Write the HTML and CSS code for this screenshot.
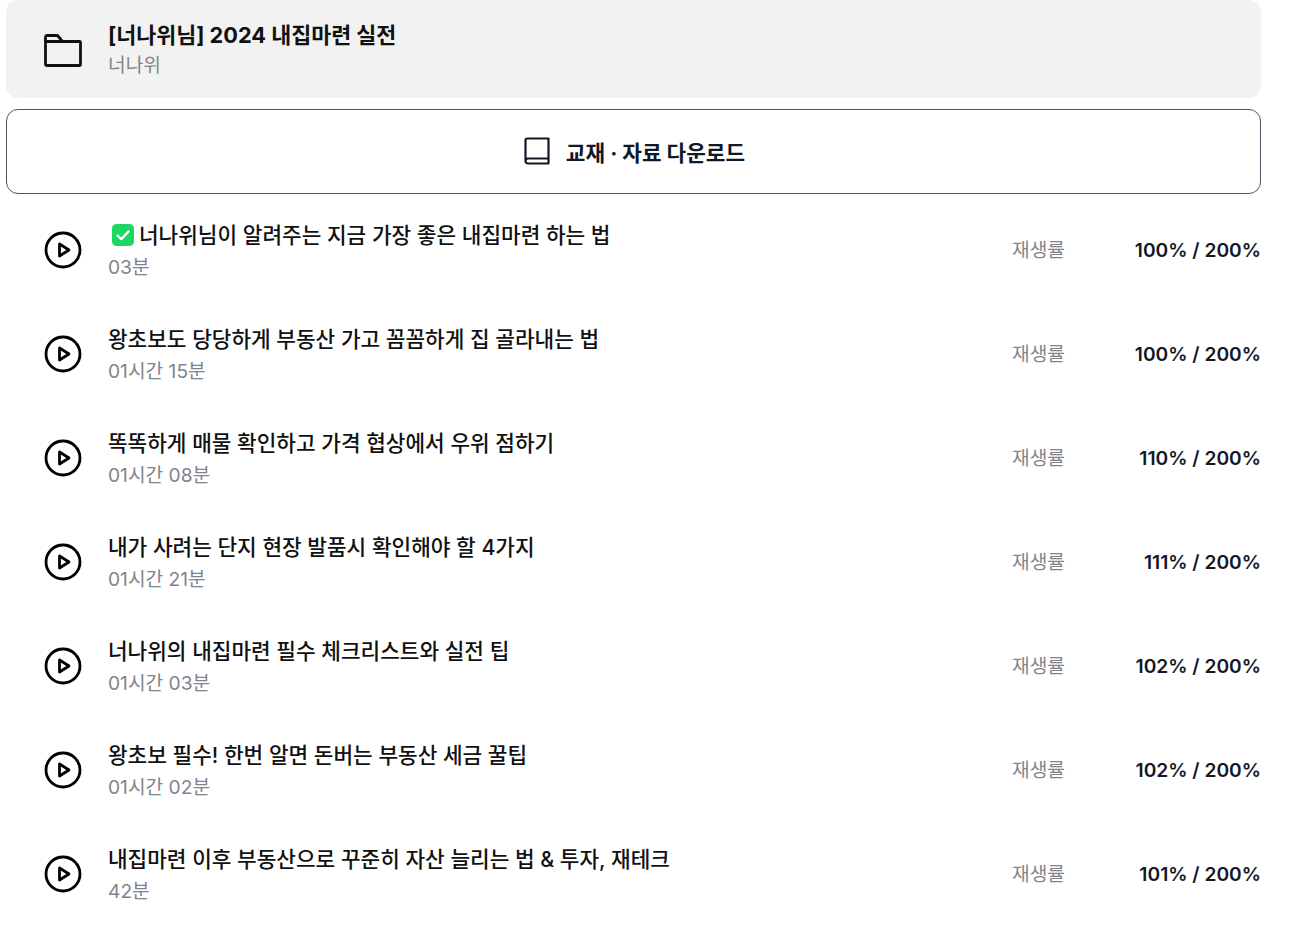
FILE: index.html
```html
<!DOCTYPE html>
<html lang="ko">
<head>
<meta charset="utf-8">
<title>2024 내집마련 실전</title>
<link rel="stylesheet" href="styles.css">
</head>
<body>
<main class="page">
  <header class="course">
    <svg class="icon" viewBox="0 0 38 38" width="38" height="38" fill="none" stroke="#111" stroke-width="2.800" stroke-linejoin="round" stroke-linecap="round"><path d="M1.500 33V6a1.500 1.500 0 0 1 1.500-1.500h10.500l5 6H35.500a1 1 0 0 1 1 1V33a1.500 1.500 0 0 1-1.500 1.500H3A1.500 1.500 0 0 1 1.500 33Z"/><path d="M1.500 10.500H18"/></svg>
    <div class="text course-text">
      <h1 class="course-title">[너나위님] 2024 내집마련 실전</h1>
      <p class="sub">너나위</p>
    </div>
  </header>
  <a class="download">
    <svg viewBox="0 0 26 28" width="26" height="28" fill="none" stroke="#111827" stroke-width="2.200" stroke-linejoin="round" stroke-linecap="round"><path d="M1.500 24V3A1.500 1.500 0 0 1 3 1.500H24.500V26.500H4A2.500 2.500 0 0 1 1.500 24Zm0 0A2.500 2.500 0 0 1 4 21.500H24.500"/></svg>
    <span>교재 · 자료 다운로드</span>
  </a>
  <ul class="list">
    <li class="row">
      <svg class="icon" viewBox="0 0 38 38" width="38" height="38" fill="none" stroke="#000" stroke-width="2.800" stroke-linejoin="round"><circle cx="19" cy="19" r="17"/><path d="M15.500 13v12l9.500-6Z"/></svg>
      <div class="text">
        <h2 class="title"><svg class="check" viewBox="0 0 24 24" width="24" height="24"><rect x="1" y="1" width="22" height="22" rx="4.500" fill="#1ed760"/><path d="M6.500 12.500l3.800 3.600 7.200-7.600" fill="none" stroke="#fff" stroke-width="2.400" stroke-linecap="round" stroke-linejoin="round"/></svg>너나위님이 알려주는 지금 가장 좋은 내집마련 하는 법</h2>
        <p class="sub">03분</p>
      </div>
      <span class="rate-label">재생률</span>
      <span class="rate">100% / 200%</span>
    </li>
    <li class="row">
      <svg class="icon" viewBox="0 0 38 38" width="38" height="38" fill="none" stroke="#000" stroke-width="2.800" stroke-linejoin="round"><circle cx="19" cy="19" r="17"/><path d="M15.500 13v12l9.500-6Z"/></svg>
      <div class="text">
        <h2 class="title">왕초보도 당당하게 부동산 가고 꼼꼼하게 집 골라내는 법</h2>
        <p class="sub">01시간 15분</p>
      </div>
      <span class="rate-label">재생률</span>
      <span class="rate">100% / 200%</span>
    </li>
    <li class="row">
      <svg class="icon" viewBox="0 0 38 38" width="38" height="38" fill="none" stroke="#000" stroke-width="2.800" stroke-linejoin="round"><circle cx="19" cy="19" r="17"/><path d="M15.500 13v12l9.500-6Z"/></svg>
      <div class="text">
        <h2 class="title">똑똑하게 매물 확인하고 가격 협상에서 우위 점하기</h2>
        <p class="sub">01시간 08분</p>
      </div>
      <span class="rate-label">재생률</span>
      <span class="rate">110% / 200%</span>
    </li>
    <li class="row">
      <svg class="icon" viewBox="0 0 38 38" width="38" height="38" fill="none" stroke="#000" stroke-width="2.800" stroke-linejoin="round"><circle cx="19" cy="19" r="17"/><path d="M15.500 13v12l9.500-6Z"/></svg>
      <div class="text">
        <h2 class="title">내가 사려는 단지 현장 발품시 확인해야 할 4가지</h2>
        <p class="sub">01시간 21분</p>
      </div>
      <span class="rate-label">재생률</span>
      <span class="rate">111% / 200%</span>
    </li>
    <li class="row">
      <svg class="icon" viewBox="0 0 38 38" width="38" height="38" fill="none" stroke="#000" stroke-width="2.800" stroke-linejoin="round"><circle cx="19" cy="19" r="17"/><path d="M15.500 13v12l9.500-6Z"/></svg>
      <div class="text">
        <h2 class="title">너나위의 내집마련 필수 체크리스트와 실전 팁</h2>
        <p class="sub">01시간 03분</p>
      </div>
      <span class="rate-label">재생률</span>
      <span class="rate">102% / 200%</span>
    </li>
    <li class="row">
      <svg class="icon" viewBox="0 0 38 38" width="38" height="38" fill="none" stroke="#000" stroke-width="2.800" stroke-linejoin="round"><circle cx="19" cy="19" r="17"/><path d="M15.500 13v12l9.500-6Z"/></svg>
      <div class="text">
        <h2 class="title">왕초보 필수! 한번 알면 돈버는 부동산 세금 꿀팁</h2>
        <p class="sub">01시간 02분</p>
      </div>
      <span class="rate-label">재생률</span>
      <span class="rate">102% / 200%</span>
    </li>
    <li class="row">
      <svg class="icon" viewBox="0 0 38 38" width="38" height="38" fill="none" stroke="#000" stroke-width="2.800" stroke-linejoin="round"><circle cx="19" cy="19" r="17"/><path d="M15.500 13v12l9.500-6Z"/></svg>
      <div class="text">
        <h2 class="title">내집마련 이후 부동산으로 꾸준히 자산 늘리는 법 &amp; 투자, 재테크</h2>
        <p class="sub">42분</p>
      </div>
      <span class="rate-label">재생률</span>
      <span class="rate">101% / 200%</span>
    </li>
  </ul>
</main>
</body>
</html>
```

FILE: styles.css
```css
* { box-sizing: border-box; }
html, body { margin: 0; padding: 0; background: #fff; }
body {
  font-family: Inter, "Noto Sans CJK KR", sans-serif;
  color: #111;
}
.page {
  width: 1255px;
  margin-left: 6px;
  height: 931px;
  overflow: hidden;
}
.course {
  display: flex;
  align-items: center;
  gap: 26px;
  height: 98px;
  padding-left: 38px;
  padding-top: 2px;
  background: #f2f2f2;
  border-radius: 12px;
}
.icon { flex: none; }
.text { flex: 1; min-width: 0; display: flex; flex-direction: column; gap: 6px; padding-top: 2px; }
.course-text { gap: 4px; padding-top: 0; }
.course-title, .title, .sub { margin: 0; white-space: nowrap; }
.course-title { font-size: 21.75px; line-height: 26px; font-weight: 700; color: #111; }
.title { font-size: 21.33px; line-height: 26px; font-weight: 500; color: #111; display: flex; align-items: center; }
.sub { font-size: 19.2px; line-height: 26px; font-weight: 400; color: #80858c; }
.download {
  display: flex;
  align-items: center;
  justify-content: center;
  gap: 16px;
  height: 85px;
  margin-top: 11px;
  padding: 0 0 1px 2px;
  border: 1px solid #4b5563;
  border-radius: 12px;
  background: #fff;
  font-size: 21.33px;
  font-weight: 700;
  color: #111827;
}
.list { list-style: none; margin: 4px 0 0; padding: 0; }
.row {
  display: flex;
  align-items: center;
  gap: 26px;
  height: 104px;
  padding-left: 38px;
}
.check { flex: none; margin: 0 4px 0 3px; }
.rate-label { flex: none; width: 83px; font-size: 19.2px; line-height: 26px; color: #80858c; white-space: nowrap; }
.rate { flex: none; width: 140px; text-align: right; font-size: 19.2px; line-height: 26px; font-weight: 600; color: #111827; white-space: nowrap; }
```
